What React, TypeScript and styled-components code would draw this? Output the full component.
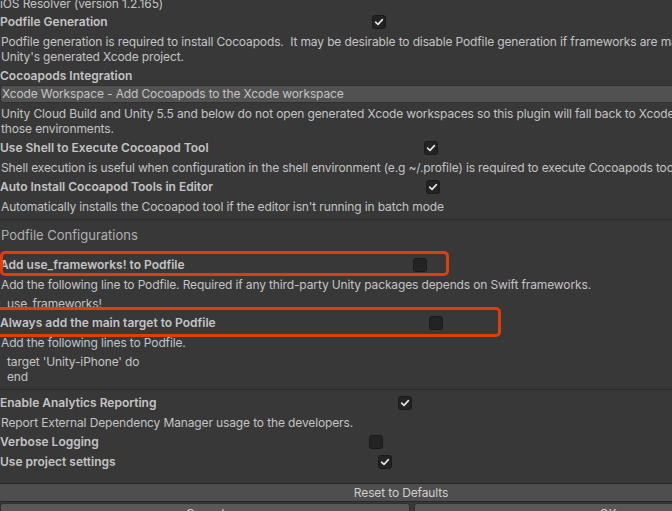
import React from "react";
import styled, { createGlobalStyle } from "styled-components";

const Global = createGlobalStyle`
  html, body { margin: 0; padding: 0; background: #383838; overflow: hidden; }
  body { font-family: Inter, "Noto Sans", sans-serif; }
`;

const Viewport = styled.div`
  width: 672px;
  height: 511px;
  overflow: hidden;
  background: #383838;
`;

const Panel = styled.div`
  position: relative;
  width: 802px;
  display: flex;
  flex-direction: column;
  color: #c4c4c4;
  font-size: 12px;
  letter-spacing: -0.13px;
`;

const Title = styled.div`
  margin-top: -4px;
  height: 15px;
  line-height: 15px;
  white-space: nowrap;
`;

const Row = styled.div<{ $gap?: number }>`
  display: flex;
  align-items: center;
  height: 20px;
  margin-top: ${(p) => p.$gap ?? 0}px;
`;

const Label = styled.div<{ $w?: number }>`
  flex: none;
  width: ${(p) => (p.$w ? `${p.$w}px` : "auto")};
  font-weight: 600;
  letter-spacing: 0;
  white-space: nowrap;
`;

const Help = styled.div`
  padding: 3px 0 1px 1px;
  line-height: 15px;
  white-space: pre;
`;

const Code = styled.div`
  padding: 3px 0 1px 7px;
  line-height: 15px;
  white-space: pre;
`;

const Dropdown = styled.div`
  box-sizing: border-box;
  height: 18px;
  line-height: 16px;
  padding-left: 1px;
  background: #515151;
  border: 1px solid #303030;
  border-radius: 3px;
  white-space: nowrap;
`;

const Separator = styled.div`
  height: 1px;
  margin-top: 4px;
  background: #2c2c2c;
`;

const SectionHeader = styled.div`
  padding: 7px 0 11px 1px;
  line-height: 16px;
  font-size: 13px;
  letter-spacing: 0;
  color: #b0b0b0;
`;

const Box = styled.div`
  box-sizing: border-box;
  width: 14px;
  height: 14px;
  margin-top: 1px;
  border-radius: 3px;
  background: #232323;
  border: 1px solid #1a1a1a;
  display: flex;
  align-items: center;
  justify-content: center;
`;

const Highlight = styled.div<{ $l: number; $t: number; $w: number; $h: number }>`
  position: absolute;
  left: ${(p) => p.$l}px;
  top: ${(p) => p.$t}px;
  width: ${(p) => p.$w}px;
  height: ${(p) => p.$h}px;
  box-sizing: border-box;
  border: 3px solid #df3e0c;
  border-radius: 5px;
  pointer-events: none;
`;

const Footer = styled.div`
  margin-top: 12px;
  border-top: 1px solid #262626;
`;

const ResetBar = styled.div`
  height: 17px;
  line-height: 17px;
  text-align: center;
  background: #4e4e4e;
  border-bottom: 1px solid #262626;
  color: #cfcfcf;
`;

const ButtonRow = styled.div`
  display: grid;
  grid-template-columns: 410px 1fr;
  gap: 4px;
  padding-top: 1px;
`;

const Button = styled.div`
  box-sizing: border-box;
  height: 22px;
  line-height: 20px;
  text-align: center;
  background: #585858;
  border: 1px solid #303030;
  border-radius: 3px;
  color: #d0d0d0;
`;

function Check({ on }: { on?: boolean }) {
  return (
    <Box>
      {on && (
        <svg width="10" height="10" viewBox="0 0 10 10">
          <polyline
            points="1.6,5.2 4,7.4 8.4,2.6"
            fill="none"
            stroke="#e8e8e8"
            strokeWidth="1.6"
            strokeLinecap="round"
            strokeLinejoin="round"
          />
        </svg>
      )}
    </Box>
  );
}

function ToggleRow({ label, x, on, gap }: { label: string; x?: number; on?: boolean; gap?: number }) {
  return (
    <Row $gap={gap}>
      <Label $w={x}>{label}</Label>
      {x !== undefined && <Check on={on} />}
    </Row>
  );
}

export default function App() {
  return (
    <Viewport>
      <Global />
      <Panel>
        <Title>iOS Resolver (version 1.2.165)</Title>
        <ToggleRow label="Podfile Generation" x={372} on />
        <Help>
          {"Podfile generation is required to install Cocoapods.  It may be desirable to disable Podfile generation if frameworks are manually included in\nUnity's generated Xcode project."}
        </Help>
        <ToggleRow label="Cocoapods Integration" />
        <Dropdown>Xcode Workspace - Add Cocoapods to the Xcode workspace</Dropdown>
        <Help>
          {"Unity Cloud Build and Unity 5.5 and below do not open generated Xcode workspaces so this plugin will fall back to Xcode projects in\nthose environments."}
        </Help>
        <ToggleRow label="Use Shell to Execute Cocoapod Tool" x={424} on />
        <Help>
          {"Shell execution is useful when configuration in the shell environment (e.g ~/.profile) is required to execute Cocoapods tools."}
        </Help>
        <ToggleRow label="Auto Install Cocoapod Tools in Editor" x={426} on />
        <Help>{"Automatically installs the Cocoapod tool if the editor isn't running in batch mode"}</Help>
        <Separator />
        <SectionHeader>Podfile Configurations</SectionHeader>
        <ToggleRow label="Add use_frameworks! to Podfile" x={413} />
        <Help>
          {"Add the following line to Podfile. Required if any third-party Unity packages depends on Swift frameworks."}
        </Help>
        <Code>use_frameworks!</Code>
        <ToggleRow label="Always add the main target to Podfile" x={429} />
        <Help>Add the following lines to Podfile.</Help>
        <Code>{"target 'Unity-iPhone' do\nend"}</Code>
        <Separator />
        <ToggleRow label="Enable Analytics Reporting" x={398} on gap={2} />
        <Help>Report External Dependency Manager usage to the developers.</Help>
        <ToggleRow label="Verbose Logging" x={369} />
        <ToggleRow label="Use project settings" x={378} on />
        <Footer>
          <ResetBar>Reset to Defaults</ResetBar>
          <ButtonRow>
            <Button>Cancel</Button>
            <Button>OK</Button>
          </ButtonRow>
        </Footer>
        <Highlight $l={0} $t={251} $w={449} $h={25} />
        <Highlight $l={-4} $t={307} $w={505} $h={30} />
      </Panel>
    </Viewport>
  );
}
